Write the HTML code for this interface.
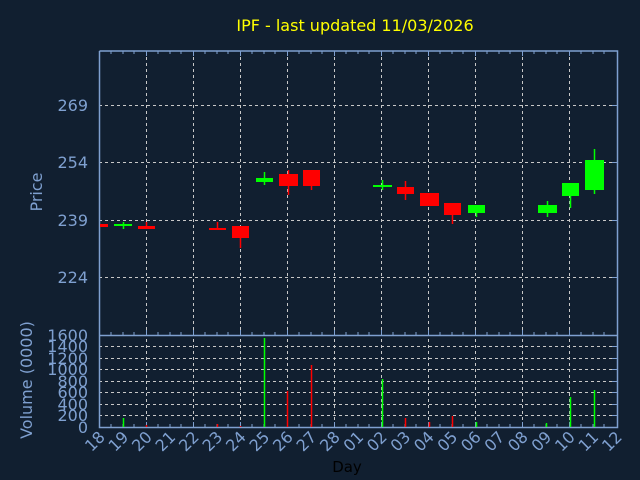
<!DOCTYPE html>
<html><head><meta charset="utf-8"><style>
html,body{margin:0;padding:0;background:#111f30;}
svg{display:block;font-family:"DejaVu Sans","Liberation Sans",sans-serif;}
</style></head><body>
<svg width="640" height="480" viewBox="0 0 640 480" xmlns="http://www.w3.org/2000/svg">
<rect width="640" height="480" fill="#111f30"/>
<text x="355" y="31" fill="#ffff00" font-size="16" text-anchor="middle">IPF - last updated 11/03/2026</text>
<g stroke="#c8c8c8" stroke-width="1" stroke-dasharray="3,3" fill="none">
<path d="M146.5 51V427M193.5 51V427M240.5 51V427M287.5 51V427M334.5 51V427M381.5 51V427M428.5 51V427M475.5 51V427M522.5 51V427M569.5 51V427"/>
<path d="M99 105.5H617M99 162.5H617M99 220.5H617M99 277.5H617"/>
<path d="M99 346.5H617M99 358.5H617M99 369.5H617M99 381.5H617M99 392.5H617M99 404.5H617M99 415.5H617"/>
</g>
<g stroke="#7fa0d0" stroke-width="1.5" fill="none">
<path d="M99.5 51V427.5H617.5V51H99.5M99.5 335.5H617.5"/>
</g>
<g stroke="#7fa0d0" stroke-width="1" id="ticks">
<path d="M111 51v3M123 51v3M134 51v3M146.5 51v5M158 51v3M170 51v3M181 51v3M193.5 51v5M205 51v3M217 51v3M228 51v3M240.5 51v5M252 51v3M264 51v3M275 51v3M287.5 51v5M299 51v3M311 51v3M322 51v3M334.5 51v5M346 51v3M358 51v3M369 51v3M381.5 51v5M393 51v3M405 51v3M416 51v3M428.5 51v5M440 51v3M452 51v3M463 51v3M475.5 51v5M487 51v3M499 51v3M510 51v3M522.5 51v5M534 51v3M546 51v3M557 51v3M569.5 51v5M581 51v3M593 51v3M604 51v3"/>
<path d="M111 335v-3M123 335v-3M134 335v-3M146.5 335v-5M158 335v-3M170 335v-3M181 335v-3M193.5 335v-5M205 335v-3M217 335v-3M228 335v-3M240.5 335v-5M252 335v-3M264 335v-3M275 335v-3M287.5 335v-5M299 335v-3M311 335v-3M322 335v-3M334.5 335v-5M346 335v-3M358 335v-3M369 335v-3M381.5 335v-5M393 335v-3M405 335v-3M416 335v-3M428.5 335v-5M440 335v-3M452 335v-3M463 335v-3M475.5 335v-5M487 335v-3M499 335v-3M510 335v-3M522.5 335v-5M534 335v-3M546 335v-3M557 335v-3M569.5 335v-5M581 335v-3M593 335v-3M604 335v-3"/>
<path d="M111 427v-3M123 427v-3M134 427v-3M146.5 427v-5M158 427v-3M170 427v-3M181 427v-3M193.5 427v-5M205 427v-3M217 427v-3M228 427v-3M240.5 427v-5M252 427v-3M264 427v-3M275 427v-3M287.5 427v-5M299 427v-3M311 427v-3M322 427v-3M334.5 427v-5M346 427v-3M358 427v-3M369 427v-3M381.5 427v-5M393 427v-3M405 427v-3M416 427v-3M428.5 427v-5M440 427v-3M452 427v-3M463 427v-3M475.5 427v-5M487 427v-3M499 427v-3M510 427v-3M522.5 427v-5M534 427v-3M546 427v-3M557 427v-3M569.5 427v-5M581 427v-3M593 427v-3M604 427v-3"/>
<path d="M612 105.5h5M612 162.5h5M612 220.5h5M612 277.5h5M612 346.5h5M612 358.5h5M612 369.5h5M612 381.5h5M612 392.5h5M612 404.5h5M612 415.5h5"/>
</g>
<g fill="#7fa0d0" font-size="16" text-anchor="end">
<text x="88" y="111">269</text><text x="88" y="168">254</text><text x="88" y="226">239</text><text x="88" y="283">224</text>
</g>
<g fill="#7fa0d0" font-size="16" text-anchor="end">
<text x="88" y="341">1600</text><text x="88" y="352">1400</text><text x="88" y="364">1200</text><text x="88" y="375">1000</text><text x="88" y="387">800</text><text x="88" y="398">600</text><text x="88" y="410">400</text><text x="88" y="421">200</text><text x="88" y="433">0</text>
</g>
<text transform="translate(42,192) rotate(-90)" fill="#7fa0d0" font-size="16" text-anchor="middle">Price</text>
<text transform="translate(32,380) rotate(-90)" fill="#7fa0d0" font-size="16" text-anchor="middle">Volume (0000)</text>
<text x="347" y="472" fill="#000000" font-size="15" text-anchor="middle">Day</text>
<g fill="#7fa0d0" font-size="16" text-anchor="end">
<text transform="translate(106,438) rotate(-45)">18</text>
<text transform="translate(129.5,438) rotate(-45)">19</text>
<text transform="translate(153,438) rotate(-45)">20</text>
<text transform="translate(176.5,438) rotate(-45)">21</text>
<text transform="translate(200,438) rotate(-45)">22</text>
<text transform="translate(223.5,438) rotate(-45)">23</text>
<text transform="translate(247,438) rotate(-45)">24</text>
<text transform="translate(270.5,438) rotate(-45)">25</text>
<text transform="translate(294,438) rotate(-45)">26</text>
<text transform="translate(317.5,438) rotate(-45)">27</text>
<text transform="translate(341,438) rotate(-45)">28</text>
<text transform="translate(364.5,438) rotate(-45)">01</text>
<text transform="translate(388,438) rotate(-45)">02</text>
<text transform="translate(411.5,438) rotate(-45)">03</text>
<text transform="translate(435,438) rotate(-45)">04</text>
<text transform="translate(458.5,438) rotate(-45)">05</text>
<text transform="translate(482,438) rotate(-45)">06</text>
<text transform="translate(505.5,438) rotate(-45)">07</text>
<text transform="translate(529,438) rotate(-45)">08</text>
<text transform="translate(552.5,438) rotate(-45)">09</text>
<text transform="translate(576,438) rotate(-45)">10</text>
<text transform="translate(599.5,438) rotate(-45)">11</text>
<text transform="translate(623,438) rotate(-45)">12</text>
</g>
<!-- candles -->
<g fill="#ff0000" stroke="#ff0000" stroke-width="1.5">
<rect x="100" y="224" width="8" height="3" stroke="none"/>
<path d="M146.5 222V229"/><rect x="138" y="226" width="17" height="3" stroke="none"/>
<path d="M217.5 222V230"/><rect x="209" y="228" width="17" height="2" stroke="none"/>
<path d="M240.5 226V248"/><rect x="232" y="226" width="17" height="12" stroke="none"/>
<path d="M288.5 170V195"/><rect x="279" y="174" width="19" height="12" stroke="none"/>
<path d="M311.5 170V190"/><rect x="303" y="170" width="17" height="16" stroke="none"/>
<path d="M405.5 181V200"/><rect x="397" y="187" width="17" height="7" stroke="none"/>
<rect x="420" y="193" width="19" height="13" stroke="none"/>
<path d="M452.5 203V224"/><rect x="444" y="203" width="17" height="12" stroke="none"/>
</g>
<g fill="#00ff00" stroke="#00ff00" stroke-width="1.5">
<path d="M123.5 222V229"/><rect x="114" y="224" width="18" height="2" stroke="none"/>
<path d="M264.5 172V185"/><rect x="256" y="178" width="17" height="4" stroke="none"/>
<path d="M382.5 180V190"/><rect x="373" y="185" width="19" height="2" stroke="none"/>
<path d="M476.5 205V217"/><rect x="468" y="205" width="17" height="8" stroke="none"/>
<path d="M547.5 201V217"/><rect x="538" y="205" width="19" height="8" stroke="none"/>
<path d="M570.5 183V208"/><rect x="562" y="183" width="17" height="13" stroke="none"/>
<path d="M594.5 149V194"/><rect x="585" y="160" width="19" height="30" stroke="none"/>
</g>
<!-- volume -->
<g stroke-width="1.5">
<path stroke="#00ff00" d="M123.5 418V427M264.5 338V427M382.5 379V427M476.5 422V427M546.5 423V427M570.5 397V427M594.5 390V427"/>
<path stroke="#ff0000" d="M146.5 425V427M217.5 424V427M240.5 426V427M287.5 391V427M311.5 365V427M405.5 418V427M429.5 422V427M452.5 416V427"/>
</g>
</svg>
</body></html>
